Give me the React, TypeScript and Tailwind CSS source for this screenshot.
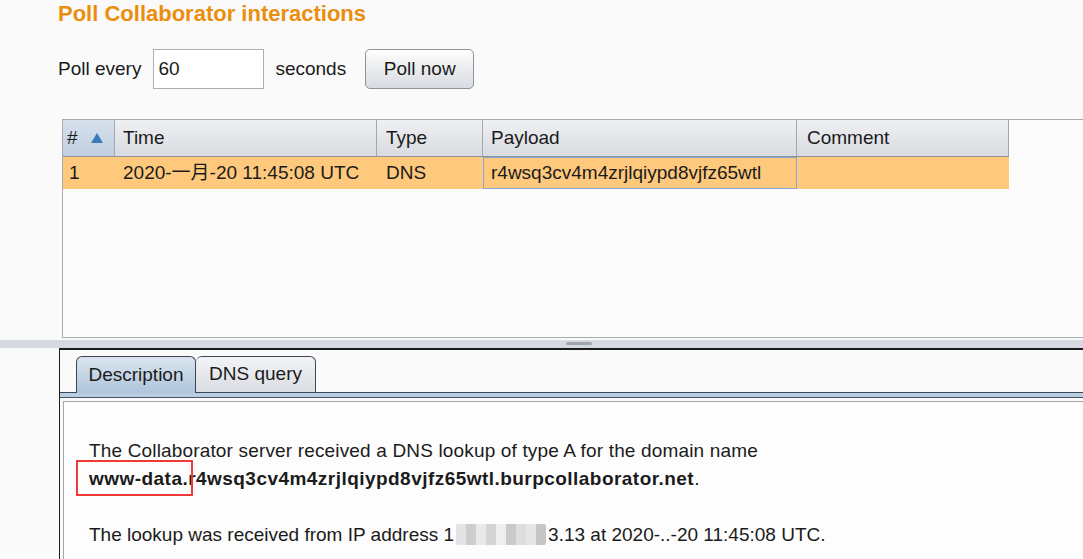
const font = { fontFamily: '"Liberation Sans", "Noto Sans CJK SC", Arial, sans-serif' };

function HeaderCell({ w, children, sorted }: { w: string; children: React.ReactNode; sorted?: boolean }) {
  return (
    <div
      className={`${w} h-full flex items-center pl-2 border-r border-[#a3a7ae] ${
        sorted ? 'bg-linear-to-b from-[#d6e1ec] to-[#bfcfdf]' : 'bg-linear-to-b from-[#eff0f3] to-[#d8dbe0]'
      }`}
    >
      {children}
    </div>
  );
}

function Mosaic() {
  const shades = ['#e4e4e4', '#cdcdcd', '#e9e9e9', '#d4d4d4', '#eeeeee', '#cacaca', '#dedede', '#e6e6e6', '#c6c6c6'];
  return (
    <span className="inline-flex align-middle h-[21px] w-[90px] mx-[2px] -mt-[3px] rounded-[2px] overflow-hidden">
      {shades.map((c, i) => (
        <span key={i} className="flex-1 h-full" style={{ background: c }} />
      ))}
    </span>
  );
}

export default function App() {
  return (
    <div className="w-[1083px] h-[559px] overflow-hidden bg-[#fafafa] text-[#1b1b1b] text-[19px]" style={font}>
      {/* title */}
      <div className="h-[49px] pl-[58px] leading-[28px] text-[22px] font-bold text-[#ea8e0e]">
        Poll Collaborator interactions
      </div>

      {/* poll row */}
      <div className="h-[40px] pl-[58px] flex items-center">
        <span>Poll every</span>
        <div className="ml-[12px] w-[111px] h-[40px] bg-white border border-[#acaeb3] flex items-center pl-[4px]">
          60
        </div>
        <span className="ml-[11px]">seconds</span>
        <button className="ml-[19px] w-[109px] h-[40px] rounded-[5px] border border-[#8d929b] bg-linear-to-b from-[#fefefe] to-[#d8dbe1] text-[#1b1b1b]">
          Poll now
        </button>
      </div>

      {/* table */}
      <div className="mt-[30px] ml-[62px] h-[219px] border-t border-l border-b border-[#a6aab1] bg-[#fcfcfc]">
        <div className="flex h-[37px] border-b border-[#8f949c] w-[946px]">
          <HeaderCell w="w-[52px]" sorted>
            <span className="-ml-[4px]">#</span>
            <svg width="12" height="10" viewBox="0 0 12 10" className="ml-[13px]">
              <path d="M6 0 L12 10 L0 10 Z" fill="#3d7abc" />
            </svg>
          </HeaderCell>
          <HeaderCell w="w-[262px]">Time</HeaderCell>
          <HeaderCell w="w-[106px]">
            <span className="pl-[1px]">Type</span>
          </HeaderCell>
          <HeaderCell w="w-[314px]">Payload</HeaderCell>
          <HeaderCell w="w-[212px]">
            <span className="pl-[2px]">Comment</span>
          </HeaderCell>
        </div>
        <div className="flex h-[32px] w-[946px] bg-[#fec97c] items-center">
          <div className="w-[52px] pl-[6px]">1</div>
          <div className="w-[262px] pl-2">2020-一月-20 11:45:08 UTC</div>
          <div className="w-[106px] pl-[9px]">DNS</div>
          <div className="w-[314px] h-full flex items-center pl-[7px] border border-[#7fa8d2]">
            r4wsq3cv4m4zrjlqiypd8vjfz65wtl
          </div>
          <div className="w-[212px]" />
        </div>
      </div>

      {/* split divider */}
      <div className="h-[10px] flex items-start">
        <div className="mt-[2px] w-full h-[8px] bg-[#d6d9df] flex justify-center pt-[2px] pl-[62px]">
          <div className="ml-[12px] w-[26px] h-[3px] rounded-[2px] bg-[#a0a5ad]" />
        </div>
      </div>

      {/* lower panel */}
      <div className="ml-[59px] h-[211px] border-t-2 border-l border-[#1c1c1c] bg-[#fafafa]">
        <div className="pt-[6px] pl-[16px] flex items-end">
          <div className="w-[120px] h-[37px] rounded-t-[6px] border border-b-0 border-[#3e4655] bg-linear-to-b from-[#dbe5ef] to-[#aec5dc] flex items-center justify-center">
            Description
          </div>
          <div className="w-[120px] h-[37px] rounded-t-[6px] border border-l-0 border-[#3e4655] bg-linear-to-b from-[#f3f4f6] to-[#d9dce1] flex items-center justify-center">
            DNS query
          </div>
          <div className="flex-1 border-b border-[#3e4655]" />
        </div>
        <div className="-mt-[1px] flex">
          <div className="w-[16px] border-t border-[#3e4655]" />
          <div className="flex-1" />
        </div>
        <div className="h-[5px] bg-[#b9cde2] -mt-[1px]" />
        <div className="border-t border-[#4a5160]" />
        <div className="mt-[3px] ml-[3px] relative h-[200px] border-t border-l border-[#a3a7ad] bg-[#fdfdfd] pt-[35px] pl-[25px] leading-[28px]">
          <div className="tracking-[0.16px]">The Collaborator server received a DNS lookup of type A for the domain name</div>
          <div>
            <b className="tracking-[0.46px]">www-data.r4wsq3cv4m4zrjlqiypd8vjfz65wtl.burpcollaborator.net</b>.
          </div>
          <div>&nbsp;</div>
          <div>
            The lookup was received from IP address 1<Mosaic />3.13 at 2020-..-20 11:45:08 UTC.
          </div>
          <div className="absolute left-[12px] top-[58px] w-[117px] h-[36px] border-2 border-[#ef3a3a]" />
        </div>
      </div>
    </div>
  );
}
